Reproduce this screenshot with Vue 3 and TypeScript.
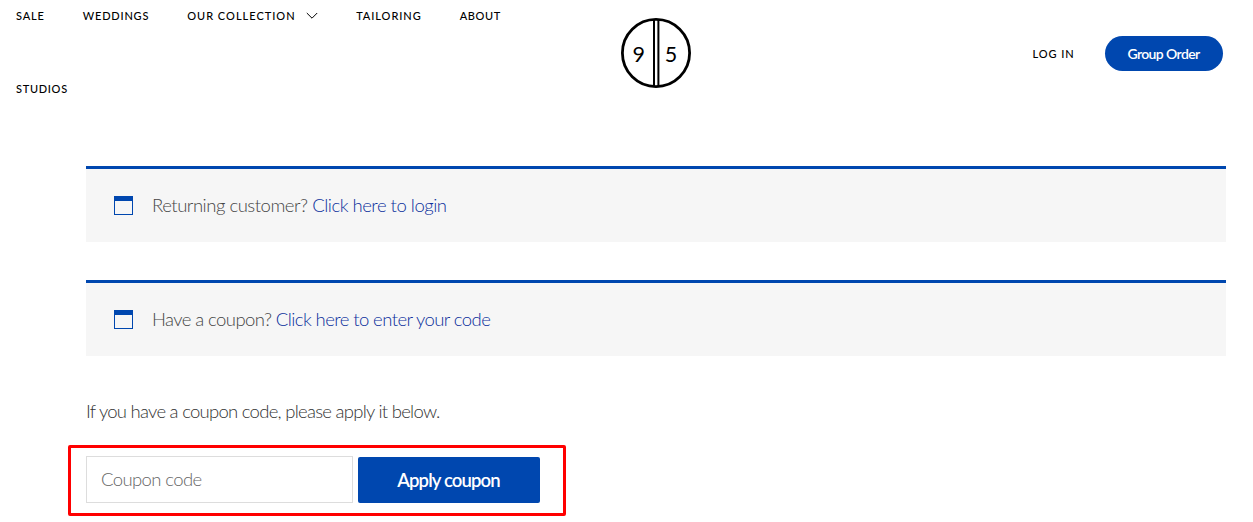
<script setup lang="ts">
import { ref } from 'vue'

interface NavItem {
    label: string
    cls: string
    dropdown?: boolean
}

interface Notice {
    question: string
    link: string
    cls: string
}

const navItems: NavItem[] = [
    { label: 'SALE', cls: 'sale' },
    { label: 'WEDDINGS', cls: 'weddings' },
    { label: 'OUR COLLECTION', cls: 'collection', dropdown: true },
    { label: 'TAILORING', cls: 'tailoring' },
    { label: 'ABOUT', cls: 'about' },
    { label: 'STUDIOS', cls: 'studios' },
]

const notices: Notice[] = [
    { question: 'Returning customer?', link: 'Click here to login', cls: 'login' },
    { question: 'Have a coupon?', link: 'Click here to enter your code', cls: 'coupon' },
]

const couponCode = ref('')
</script>

<template>
    <div class="page">
        <header class="header">
            <nav class="nav">
                <a v-for="item in navItems" :key="item.label" class="nav-link" :class="item.cls">
                    <span>{{ item.label }}</span>
                    <svg v-if="item.dropdown" class="chevron" width="12" height="8" viewBox="0 0 12 8">
                        <path d="M0.8 1 L6 6.2 L11.2 1" fill="none" stroke="#000" stroke-width="1" />
                    </svg>
                </a>
            </nav>
            <svg class="logo" width="70" height="70" viewBox="0 0 70 70">
                <circle cx="35" cy="35" r="33.6" fill="none" stroke="#000" stroke-width="2.8" />
                <path d="M33 2 V68 M37.4 2 V68" stroke="#000" stroke-width="2" />
                <text x="17.8" y="44" text-anchor="middle">9</text>
                <text x="50" y="44" text-anchor="middle">5</text>
            </svg>
            <div class="account">
                <a class="nav-link log-in"><span>LOG IN</span></a>
                <a class="group-order"><span>Group Order</span></a>
            </div>
        </header>

        <main class="checkout">
            <div v-for="notice in notices" :key="notice.cls" class="notice" :class="notice.cls">
                <i class="notice-icon"></i>
                <span class="notice-text">{{ notice.question }} <a>{{ notice.link }}</a></span>
            </div>

            <p class="hint"><span>If you have a coupon code, please apply it below.</span></p>

            <form class="coupon-form" @submit.prevent>
                <input v-model="couponCode" type="text" placeholder="Coupon code">
                <button type="submit"><span>Apply coupon</span></button>
            </form>
        </main>
    </div>
</template>

<style>
    body {
        margin: 0;
        background: #fff;
    }
</style>

<style scoped>
    .page {
        height: 522px;
        overflow: hidden;
        font-family: Lato, "Open Sans", sans-serif;
        font-weight: 300;
        color: #333;
    }

    .header {
        display: grid;
        grid-template-columns: 605px 70px 1fr;
        padding: 8px 30px 0 16px;
        height: 158px;
        box-sizing: border-box;
    }

    .nav {
        display: flex;
        flex-wrap: wrap;
        align-content: flex-start;
        width: 525px;
        row-gap: 57px;
        column-gap: 38px;
    }

    .nav-link {
        display: flex;
        align-items: center;
        height: 16px;
        font-size: 11px;
        font-weight: 500;
        line-height: 16px;
        letter-spacing: 1px;
        color: #000;
        white-space: nowrap;
    }

    .sale {
        letter-spacing: 0.85px;
    }

    .weddings {
        letter-spacing: 0.8px;
    }

    .tailoring {
        letter-spacing: 0.95px;
    }

    .about {
        letter-spacing: 0.6px;
    }

    .studios {
        letter-spacing: 0.7px;
    }

    .chevron {
        margin: -1px 0.5px 0 10px;
    }

    .logo {
        margin-top: 10px;
    }

    .logo text {
        font-size: 21.5px;
        font-weight: 400;
    }

    .account {
        display: flex;
        justify-content: flex-end;
        align-items: center;
        height: 35px;
        margin-top: 28px;
    }

    .log-in {
        margin-right: 30.5px;
        letter-spacing: 0.9px;
    }

    .group-order {
        display: flex;
        justify-content: center;
        align-items: center;
        box-sizing: border-box;
        width: 118px;
        height: 35px;
        padding-right: 1px;
        border-radius: 18px;
        background: #0047af;
        color: #fff;
        font-size: 14px;
        font-weight: 600;
        letter-spacing: -0.6px;
    }

    .checkout {
        width: 1140px;
        margin-left: 86px;
        padding-top: 8px;
    }

    .notice {
        display: flex;
        align-items: center;
        box-sizing: border-box;
        height: 76px;
        margin-bottom: 38px;
        padding-left: 28px;
        border-top: 3px solid #0047af;
        background: #f6f6f6;
        font-size: 18.5px;
        color: #454545;
    }

    .notice.login {
        letter-spacing: -0.48px;
    }

    .notice.coupon {
        letter-spacing: -0.58px;
    }

    .notice a {
        color: #0b2f9c;
    }

    .notice-icon {
        box-sizing: border-box;
        width: 19px;
        height: 19px;
        margin-right: 19px;
        border: 1px solid #0047af;
        border-top-width: 5px;
    }

    .notice-text {
        padding-bottom: 1px;
    }

    .hint {
        margin: 0;
        height: 36px;
        line-height: 35px;
        font-size: 18.5px;
        letter-spacing: -0.73px;
    }

    .coupon-form {
        display: flex;
        align-items: flex-start;
        box-sizing: border-box;
        width: 498px;
        height: 71px;
        margin: 15px 0 0 -18px;
        padding: 8px 0 0 15px;
        border: 3px solid #f00;
        border-radius: 2px;
    }

    .coupon-form input {
        box-sizing: border-box;
        width: 267px;
        height: 47px;
        margin: 0 5px 0 0;
        padding: 0 14px 1px;
        border: 1px solid #ddd;
        background: #fff;
        font-family: inherit;
        font-size: 18.5px;
        font-weight: 300;
        letter-spacing: -0.6px;
    }

    .coupon-form input::placeholder {
        color: #666;
        opacity: 1;
    }

    .coupon-form button {
        width: 182px;
        height: 46px;
        margin: 1px 0 0;
        padding: 0 1px 0 0;
        border: 0;
        border-radius: 2px;
        background: #0047af;
        color: #fff;
        font-family: inherit;
        font-size: 18.5px;
        font-weight: 600;
        letter-spacing: -0.85px;
    }
</style>
